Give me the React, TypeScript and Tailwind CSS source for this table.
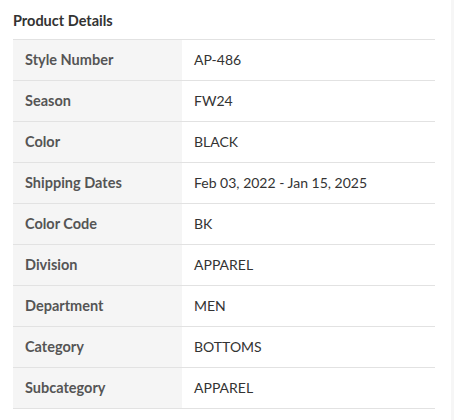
const rows: [string, string][] = [
  ["Style Number", "AP-486"],
  ["Season", "FW24"],
  ["Color", "BLACK"],
  ["Shipping Dates", "Feb 03, 2022 - Jan 15, 2025"],
  ["Color Code", "BK"],
  ["Division", "APPAREL"],
  ["Department", "MEN"],
  ["Category", "BOTTOMS"],
  ["Subcategory", "APPAREL"],
];

export default function App() {
  return (
    <div className="flex h-[420px] w-[454px] font-['Lato',sans-serif] bg-white">
      <div className="w-[451px] px-[13px]">
        <h2 className="pt-[11px] pb-[8px] text-[14.5px] leading-[20px] font-bold text-[#333]">
          Product Details
        </h2>
        <table className="w-[422px] border-collapse border-t border-[#e2e2e2]">
          <tbody>
            {rows.map(([label, value]) => (
              <tr key={label} className="border-b border-[#e2e2e2]">
                <td className="w-[169px] h-[41px] bg-[#f5f5f5] pl-[12px] text-[14.5px] leading-[20px] font-bold text-[#555]">
                  {label}
                </td>
                <td className="h-[41px] pl-[12px] text-[14px] leading-[20px] text-[#333]">{value}</td>
              </tr>
            ))}
          </tbody>
        </table>
      </div>
      <div className="flex-1 bg-[#f6f6f6]" />
    </div>
  );
}
